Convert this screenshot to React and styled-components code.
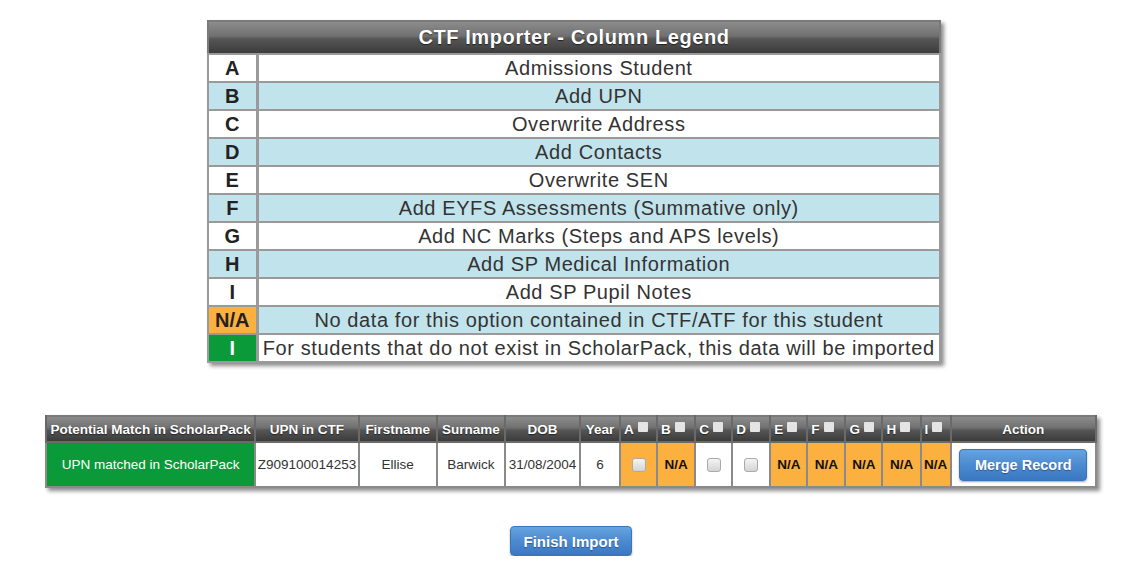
import React from "react";
import styled, { createGlobalStyle, css } from "styled-components";

const GlobalStyle = createGlobalStyle`
  html, body {
    margin: 0;
    padding: 0;
    background: #fff;
    font-family: "Liberation Sans", Arial, sans-serif;
  }
`;

const legend = [
  { key: "A", text: "Admissions Student" },
  { key: "B", text: "Add UPN" },
  { key: "C", text: "Overwrite Address" },
  { key: "D", text: "Add Contacts" },
  { key: "E", text: "Overwrite SEN" },
  { key: "F", text: "Add EYFS Assessments (Summative only)" },
  { key: "G", text: "Add NC Marks (Steps and APS levels)" },
  { key: "H", text: "Add SP Medical Information" },
  { key: "I", text: "Add SP Pupil Notes" },
  { key: "N/A", text: "No data for this option contained in CTF/ATF for this student", tone: "na" },
  { key: "I", text: "For students that do not exist in ScholarPack, this data will be imported", tone: "new" },
];

const columns = [
  { label: "Potential Match in ScholarPack", width: 209 },
  { label: "UPN in CTF", width: 103 },
  { label: "Firstname", width: 78 },
  { label: "Surname", width: 68 },
  { label: "DOB", width: 75 },
  { label: "Year", width: 40 },
  { label: "A", width: 37, check: true },
  { label: "B", width: 38, check: true },
  { label: "C", width: 37, check: true },
  { label: "D", width: 38, check: true },
  { label: "E", width: 37, check: true },
  { label: "F", width: 38, check: true },
  { label: "G", width: 37, check: true },
  { label: "H", width: 38, check: true },
  { label: "I", width: 30, check: true },
  { label: "Action", width: 145 },
];

const options = [
  { col: "A", na: false, orange: true },
  { col: "B", na: true },
  { col: "C", na: false },
  { col: "D", na: false },
  { col: "E", na: true },
  { col: "F", na: true },
  { col: "G", na: true },
  { col: "H", na: true },
  { col: "I", na: true },
];

const Page = styled.div`
  display: flex;
  flex-direction: column;
  align-items: center;
  padding-top: 20px;
`;

const headerGradient = css`
  background: linear-gradient(to bottom, #8c8c8c 0%, #707070 45%, #555 55%, #3c3c3c 100%);
  color: #fff;
  font-weight: bold;
  text-shadow: 0 1px 1px #222;
`;

const LegendTable = styled.table`
  width: 734px;
  border-collapse: collapse;
  table-layout: fixed;
  border: 2px solid #7a7a7a;
  box-shadow: 3px 3px 4px rgba(0, 0, 0, 0.45);
`;

const LegendHead = styled.th`
  ${headerGradient}
  height: 31px;
  padding: 0;
  font-size: 20px;
  letter-spacing: 0.6px;
  text-align: center;
`;

const LegendRow = styled.tr`
  background: ${(p) => (p.$shaded ? "#c1e3ec" : "#fff")};
`;

const LegendKey = styled.td`
  height: 26px;
  padding: 0;
  border: 2px solid #9a9a9a;
  border-right-width: 3px;
  text-align: center;
  font-size: 20px;
  font-weight: bold;
  line-height: 22px;
  color: ${(p) => (p.$tone === "new" ? "#fff" : "#222")};
  background: ${(p) =>
    p.$tone === "na" ? "#fbb040" : p.$tone === "new" ? "#0a9a3a" : "inherit"};
`;

const LegendText = styled.td`
  padding: 0;
  border: 2px solid #9a9a9a;
  text-align: center;
  font-size: 20px;
  line-height: 22px;
  letter-spacing: 0.6px;
  color: #333;
  white-space: nowrap;
`;

const MatchTable = styled.table`
  margin-top: 52px;
  margin-left: -6px;
  width: 1052px;
  border-collapse: collapse;
  table-layout: fixed;
  border: 2px solid #7a7a7a;
  box-shadow: 3px 3px 4px rgba(0, 0, 0, 0.45);
`;

const MatchHead = styled.th`
  ${headerGradient}
  height: 24px;
  padding: 0 0 0 ${(p) => (p.$check ? "3px" : "0")};
  border: 2px solid #6a6a6a;
  border-top: none;
  font-size: 13.5px;
  text-align: ${(p) => (p.$check ? "left" : "center")};
  white-space: nowrap;
  overflow: hidden;
`;

const HeadBox = styled.span`
  display: inline-block;
  width: 10px;
  height: 10px;
  margin-left: 4px;
  vertical-align: 2px;
  background: #e4e4e4;
  border-radius: 1px;
`;

const Cell = styled.td`
  height: 43px;
  padding: 0;
  border: 2px solid #8a8a8a;
  text-align: center;
  font-size: 13.5px;
  color: #333;
  white-space: nowrap;
  background: ${(p) =>
    p.$tone === "green" ? "#0a9a3a" : p.$tone === "orange" ? "#fbb040" : "#fff"};
  ${(p) =>
    p.$tone === "green" &&
    css`
      color: #fff;
    `}
  ${(p) =>
    p.$bold &&
    css`
      font-weight: bold;
      color: #111;
    `}
`;

const Check = styled.span`
  display: inline-block;
  width: 12px;
  height: 12px;
  border: 1px solid #aaa;
  border-radius: 3px;
  background: linear-gradient(to bottom, #f4f4f4, #d4d4d4);
  vertical-align: middle;
`;

const BlueButton = styled.button`
  display: inline-flex;
  align-items: center;
  justify-content: center;
  width: ${(p) => p.$width}px;
  height: ${(p) => p.$height}px;
  padding: 0;
  border: 1px solid #3a75b8;
  border-radius: 4px;
  background: linear-gradient(to bottom, #66a3e0 0%, #4a88cf 55%, #3b78c2 100%);
  box-shadow: 0 1px 2px rgba(0, 0, 0, 0.35);
  color: #fff;
  font-family: "Liberation Sans", Arial, sans-serif;
  font-size: ${(p) => p.$size}px;
  font-weight: bold;
  text-shadow: 0 1px 1px rgba(0, 0, 0, 0.35);
`;

const Footer = styled.div`
  margin-top: 38px;
  margin-left: -6px;
`;

export default function App() {
  return (
    <>
      <GlobalStyle />
      <Page>
        <LegendTable>
          <colgroup>
            <col style={{ width: 49 }} />
            <col />
          </colgroup>
          <thead>
            <tr>
              <LegendHead colSpan={2}>CTF Importer - Column Legend</LegendHead>
            </tr>
          </thead>
          <tbody>
            {legend.map((row, i) => (
              <LegendRow key={i} $shaded={i % 2 === 1}>
                <LegendKey $tone={row.tone}>{row.key}</LegendKey>
                <LegendText>{row.text}</LegendText>
              </LegendRow>
            ))}
          </tbody>
        </LegendTable>

        <MatchTable>
          <colgroup>
            {columns.map((c, i) => (
              <col key={i} style={{ width: c.width }} />
            ))}
          </colgroup>
          <thead>
            <tr>
              {columns.map((c, i) => (
                <MatchHead key={i} $check={c.check}>
                  {c.label}
                  {c.check && <HeadBox />}
                </MatchHead>
              ))}
            </tr>
          </thead>
          <tbody>
            <tr>
              <Cell $tone="green">UPN matched in ScholarPack</Cell>
              <Cell>Z909100014253</Cell>
              <Cell>Ellise</Cell>
              <Cell>Barwick</Cell>
              <Cell>31/08/2004</Cell>
              <Cell>6</Cell>
              {options.map((o) =>
                o.na ? (
                  <Cell key={o.col} $tone="orange" $bold>
                    N/A
                  </Cell>
                ) : (
                  <Cell key={o.col} $tone={o.orange ? "orange" : undefined}>
                    <Check />
                  </Cell>
                )
              )}
              <Cell>
                <BlueButton $width={128} $height={32} $size={14.5}>
                  Merge Record
                </BlueButton>
              </Cell>
            </tr>
          </tbody>
        </MatchTable>

        <Footer>
          <BlueButton $width={122} $height={30} $size={15}>
            Finish Import
          </BlueButton>
        </Footer>
      </Page>
    </>
  );
}
